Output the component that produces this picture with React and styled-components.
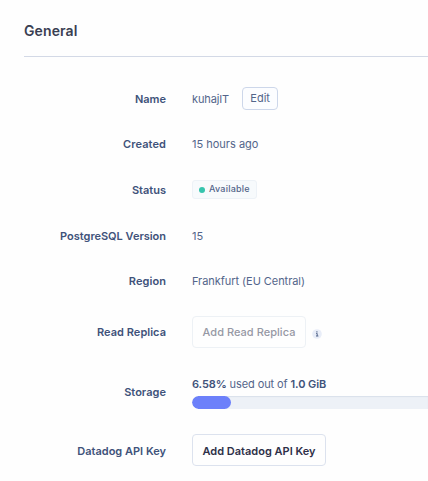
import React from "react";
import styled, { createGlobalStyle } from "styled-components";

const GlobalStyle = createGlobalStyle`
  * { box-sizing: border-box; }
  body {
    margin: 0;
    background: #fefefe;
    color: #53658a;
    font-family: Inter, "Liberation Sans", sans-serif;
    font-size: 11px;
    line-height: 16px;
    overflow: hidden;
  }
`;

const Page = styled.main`
  height: 481px;
  padding-left: 24px;
  overflow: hidden;
`;

const Header = styled.header`
  height: 57px;
  padding-top: 21px;
  border-bottom: 1px solid #d3d9e6;
`;

const Title = styled.h1`
  margin: 0;
  color: #3a3f52;
  font-size: 14px;
  font-weight: 600;
  line-height: 20px;
  letter-spacing: 0.1px;
`;

const Details = styled.dl`
  margin: 0;
  padding-top: 19px;
`;

const Row = styled.div`
  display: grid;
  grid-template-columns: 142px 1fr;
  column-gap: 26px;
  align-items: center;
  height: ${(p) => p.$height}px;
`;

const Label = styled.dt`
  color: #40527a;
  font-weight: 580;
  text-align: right;
  white-space: nowrap;
`;

const Value = styled.dd`
  display: flex;
  align-items: center;
  margin: 0;
  min-width: 0;
  white-space: nowrap;
`;

const Text = styled.span`
  letter-spacing: ${(p) => p.$tracking || 0}px;
`;

const EditButton = styled.button`
  width: 36px;
  height: 23px;
  margin: -1px 0 0 13px;
  padding: 0 0 1px;
  border: 1px solid #cdd7ea;
  border-radius: 4px;
  background: #fcfdff;
  color: #53658a;
  font: 400 11px/16px Inter, sans-serif;
`;

const StatusBadge = styled.span`
  display: flex;
  align-items: center;
  width: 65px;
  height: 19px;
  margin-top: -1px;
  padding: 0 0 1px 6px;
  border: 1px solid #edf2f7;
  border-radius: 3px;
  background: #f7fafc;
  font-size: 9px;
  font-weight: 500;
  line-height: 14px;
`;

const StatusDot = styled.i`
  width: 6px;
  height: 6px;
  margin: 2px 4px 0 0;
  border-radius: 50%;
  background: #35c4ad;
`;

const ActionButton = styled.button`
  width: ${(p) => p.$width}px;
  height: 32px;
  padding: 0;
  border: 1px solid #dce2ee;
  border-radius: 4px;
  background: #fefefe;
  color: #2e3048;
  font: 600 11px/16px Inter, sans-serif;
  white-space: nowrap;

  &:disabled {
    border-color: #edf1f5;
    color: #9698a4;
    font-weight: 550;
  }

  &:enabled {
    margin-top: -1px;
    padding-top: 2px;
  }
`;

const InfoIcon = styled.svg`
  display: block;
  margin: 3px 0 0 6px;
`;

const Usage = styled.div`
  flex: 1;
  padding-top: 1px;
`;

const UsageText = styled.p`
  margin: 0 0 4px;

  strong {
    color: #40527a;
    font-weight: 600;
  }
`;

const Track = styled.div`
  height: 13px;
  overflow: hidden;
  border-radius: 6.5px 0 0 6.5px;
  background: #edf1f7;
  box-shadow: inset 0 1px 1px #d9e0ea;
`;

const Progress = styled.div`
  width: 39px;
  height: 100%;
  border-radius: 6.5px;
  background: #6c80fa;
`;

function Detail({ label, height, tracking, children }) {
  return (
    <Row $height={height}>
      <Label><Text $tracking={tracking}>{label}</Text></Label>
      <Value>{children}</Value>
    </Row>
  );
}

export default function App() {
  return (
    <>
      <GlobalStyle />
      <Page>
        <Header><Title>General</Title></Header>
        <Details>
          <Detail label="Name" height={46}>
            <Text $tracking={-0.12}>kuhajIT</Text>
            <EditButton><Text>Edit</Text></EditButton>
          </Detail>
          <Detail label="Created" height={44} tracking={0.1}><Text>15 hours ago</Text></Detail>
          <Detail label="Status" height={47}>
            <StatusBadge><StatusDot /><Text $tracking={0.22}>Available</Text></StatusBadge>
          </Detail>
          <Detail label="PostgreSQL Version" height={46} tracking={-0.02}><Text>15</Text></Detail>
          <Detail label="Region" height={44} tracking={0.08}><Text $tracking={-0.05}>Frankfurt (EU Central)</Text></Detail>
          <Detail label="Read Replica" height={58} tracking={0.03}>
            <ActionButton $width={114} disabled><Text $tracking={0.04}>Add Read Replica</Text></ActionButton>
            <InfoIcon width="10" height="10" viewBox="0 0 10 10" aria-label="Information">
              <circle cx="5" cy="5" r="4.8" fill="#e8edf8" />
              <path d="M4.2 4.5h1v2.5M4 7h2.4" fill="none" stroke="#53658a" strokeWidth="1" />
              <rect x="4.3" y="2.3" width="1.2" height="1.2" fill="#53658a" />
            </InfoIcon>
          </Detail>
          <Detail label="Storage" height={62} tracking={0.04}>
            <Usage>
              <UsageText><Text $tracking={-0.1}><strong>6.58%</strong> used out of <strong>1.0 GiB</strong></Text></UsageText>
              <Track><Progress /></Track>
            </Usage>
          </Detail>
          <Detail label="Datadog API Key" height={55}>
            <ActionButton $width={134}><Text>Add Datadog API Key</Text></ActionButton>
          </Detail>
        </Details>
      </Page>
    </>
  );
}
